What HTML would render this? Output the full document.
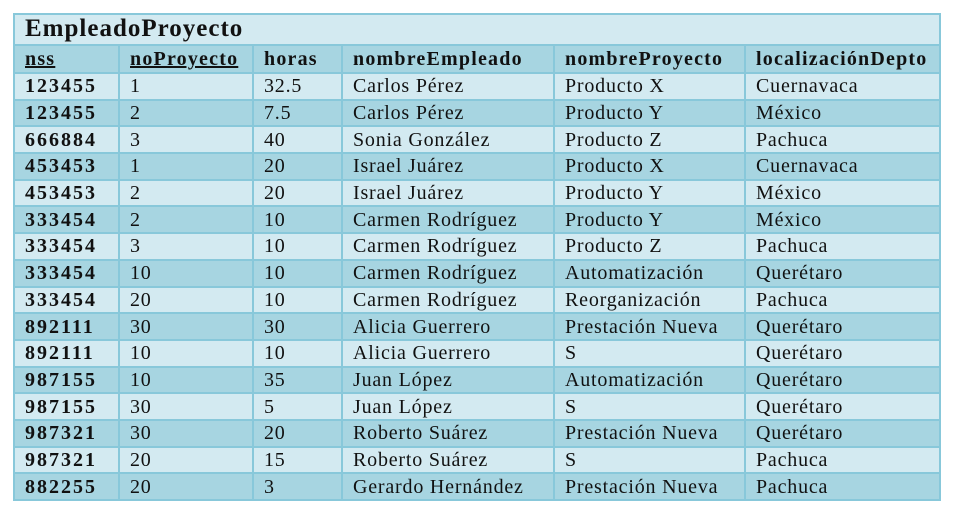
<!DOCTYPE html>
<html><head><meta charset="utf-8"><style>
body{margin:0;background:#fff;width:973px;height:519px;overflow:hidden;font-family:"Liberation Serif",serif;}
#t{position:absolute;left:13px;top:13px;width:928px;height:486px;box-sizing:border-box;border:2px solid #88c8da;background:#d3eaf1;}
table{position:absolute;left:13px;top:44px;border-collapse:collapse;table-layout:fixed;width:928px;}
tr{height:26.7px}
tr.h{height:28px}
td{border:2px solid #88c8da;padding:0 0 0 10px;font-size:20px;letter-spacing:0.8px;color:#111;line-height:22px;white-space:nowrap;overflow:hidden;}
tr.h td{font-weight:bold;background:#a7d5e1;letter-spacing:1.2px}
tr.d td{background:#a7d5e1}
tr.l td{background:#d3eaf1}
td:first-child{font-weight:bold;letter-spacing:2px}
tr.h td:first-child{letter-spacing:1.2px}
.title{position:absolute;left:25px;top:13px;font-size:25px;letter-spacing:1px;font-weight:bold;line-height:32px;color:#111}
u{text-decoration-thickness:2px}
</style></head><body>
<div id="t"></div>
<div class="title">EmpleadoProyecto</div>
<table>
<colgroup><col style="width:105px"><col style="width:134px"><col style="width:89px"><col style="width:212px"><col style="width:191px"><col style="width:195px"></colgroup>
<tr class="h"><td><u>nss</u></td><td><u>noProyecto</u></td><td>horas</td><td>nombreEmpleado</td><td>nombreProyecto</td><td>localizaciónDepto</td></tr>
<tr class="l"><td>123455</td><td>1</td><td>32.5</td><td>Carlos Pérez</td><td>Producto X</td><td>Cuernavaca</td></tr>
<tr class="d"><td>123455</td><td>2</td><td>7.5</td><td>Carlos Pérez</td><td>Producto Y</td><td>México</td></tr>
<tr class="l"><td>666884</td><td>3</td><td>40</td><td>Sonia González</td><td>Producto Z</td><td>Pachuca</td></tr>
<tr class="d"><td>453453</td><td>1</td><td>20</td><td>Israel Juárez</td><td>Producto X</td><td>Cuernavaca</td></tr>
<tr class="l"><td>453453</td><td>2</td><td>20</td><td>Israel Juárez</td><td>Producto Y</td><td>México</td></tr>
<tr class="d"><td>333454</td><td>2</td><td>10</td><td>Carmen Rodríguez</td><td>Producto Y</td><td>México</td></tr>
<tr class="l"><td>333454</td><td>3</td><td>10</td><td>Carmen Rodríguez</td><td>Producto Z</td><td>Pachuca</td></tr>
<tr class="d"><td>333454</td><td>10</td><td>10</td><td>Carmen Rodríguez</td><td>Automatización</td><td>Querétaro</td></tr>
<tr class="l"><td>333454</td><td>20</td><td>10</td><td>Carmen Rodríguez</td><td>Reorganización</td><td>Pachuca</td></tr>
<tr class="d"><td>892111</td><td>30</td><td>30</td><td>Alicia Guerrero</td><td>Prestación Nueva</td><td>Querétaro</td></tr>
<tr class="l"><td>892111</td><td>10</td><td>10</td><td>Alicia Guerrero</td><td>S</td><td>Querétaro</td></tr>
<tr class="d"><td>987155</td><td>10</td><td>35</td><td>Juan López</td><td>Automatización</td><td>Querétaro</td></tr>
<tr class="l"><td>987155</td><td>30</td><td>5</td><td>Juan López</td><td>S</td><td>Querétaro</td></tr>
<tr class="d"><td>987321</td><td>30</td><td>20</td><td>Roberto Suárez</td><td>Prestación Nueva</td><td>Querétaro</td></tr>
<tr class="l"><td>987321</td><td>20</td><td>15</td><td>Roberto Suárez</td><td>S</td><td>Pachuca</td></tr>
<tr class="d"><td>882255</td><td>20</td><td>3</td><td>Gerardo Hernández</td><td>Prestación Nueva</td><td>Pachuca</td></tr>
</table>
</body></html>
